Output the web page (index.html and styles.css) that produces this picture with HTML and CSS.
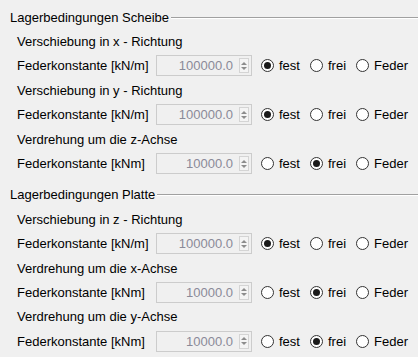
FILE: index.html
```html
<!DOCTYPE html>
<html>
<head>
<meta charset="utf-8">
<link rel="stylesheet" href="styles.css">
</head>
<body>
<div class="panel">
  <section class="group">
    <div class="legend"><span class="legend-text">Lagerbedingungen Scheibe</span><span class="legend-line"></span></div>
    <div class="sub">Verschiebung in x - Richtung</div>
    <div class="row">
      <span class="label">Federkonstante [kN/m]</span>
      <div class="spin"><span class="value">100000.0</span><span class="btn"><i class="up"></i><i class="down"></i></span></div>
      <div class="radios">
        <span class="radio checked"><i></i>fest</span>
        <span class="radio"><i></i>frei</span>
        <span class="radio"><i></i>Feder</span>
      </div>
    </div>
    <div class="sub">Verschiebung in y - Richtung</div>
    <div class="row">
      <span class="label">Federkonstante [kN/m]</span>
      <div class="spin"><span class="value">100000.0</span><span class="btn"><i class="up"></i><i class="down"></i></span></div>
      <div class="radios">
        <span class="radio checked"><i></i>fest</span>
        <span class="radio"><i></i>frei</span>
        <span class="radio"><i></i>Feder</span>
      </div>
    </div>
    <div class="sub">Verdrehung um die z-Achse</div>
    <div class="row">
      <span class="label">Federkonstante [kNm]</span>
      <div class="spin"><span class="value">10000.0</span><span class="btn"><i class="up"></i><i class="down"></i></span></div>
      <div class="radios">
        <span class="radio"><i></i>fest</span>
        <span class="radio checked"><i></i>frei</span>
        <span class="radio"><i></i>Feder</span>
      </div>
    </div>
  </section>
  <section class="group">
    <div class="legend"><span class="legend-text">Lagerbedingungen Platte</span><span class="legend-line"></span></div>
    <div class="sub">Verschiebung in z - Richtung</div>
    <div class="row">
      <span class="label">Federkonstante [kN/m]</span>
      <div class="spin"><span class="value">100000.0</span><span class="btn"><i class="up"></i><i class="down"></i></span></div>
      <div class="radios">
        <span class="radio checked"><i></i>fest</span>
        <span class="radio"><i></i>frei</span>
        <span class="radio"><i></i>Feder</span>
      </div>
    </div>
    <div class="sub">Verdrehung um die x-Achse</div>
    <div class="row">
      <span class="label">Federkonstante [kNm]</span>
      <div class="spin"><span class="value">10000.0</span><span class="btn"><i class="up"></i><i class="down"></i></span></div>
      <div class="radios">
        <span class="radio"><i></i>fest</span>
        <span class="radio checked"><i></i>frei</span>
        <span class="radio"><i></i>Feder</span>
      </div>
    </div>
    <div class="sub">Verdrehung um die y-Achse</div>
    <div class="row">
      <span class="label">Federkonstante [kNm]</span>
      <div class="spin"><span class="value">10000.0</span><span class="btn"><i class="up"></i><i class="down"></i></span></div>
      <div class="radios">
        <span class="radio"><i></i>fest</span>
        <span class="radio checked"><i></i>frei</span>
        <span class="radio"><i></i>Feder</span>
      </div>
    </div>
  </section>
</div>
</body>
</html>
```

FILE: styles.css
```css
html, body {
  margin: 0;
  padding: 0;
  background: #f0f0f0;
}
body {
  font-family: "Liberation Sans", Arial, sans-serif;
  font-size: 13px;
  color: #000;
  width: 418px;
  height: 357px;
  overflow: hidden;
}
.panel {
  padding-top: 5px;
  display: flex;
  flex-direction: column;
  gap: 7px;
}
.group {
  display: flex;
  flex-direction: column;
}
.legend, .sub, .row {
  height: 24.4px;
  display: flex;
  align-items: center;
}
.legend {
  padding-left: 10px;
}
.legend-text {
  white-space: nowrap;
}
.legend-line {
  flex: 1;
  height: 0;
  margin-left: 2px;
  border-top: 1px solid #a0a0a0;
  border-bottom: 1px solid #ffffff;
  margin-top: 1px;
}
.sub {
  padding-left: 17px;
}
.row {
  padding-left: 17px;
}
.label {
  width: 139px;
  white-space: nowrap;
}
.spin {
  box-sizing: border-box;
  width: 96px;
  height: 21px;
  border: 1px solid #cccccc;
  display: flex;
  align-items: center;
  justify-content: flex-end;
  padding-right: 2px;
}
.value {
  color: #8a8a98;
  margin-right: 6px;
}
.btn {
  box-sizing: border-box;
  width: 10px;
  height: 15px;
  border: 1px solid #d4d4d4;
  background: #f4f4f4;
  display: flex;
  flex-direction: column;
  align-items: center;
  justify-content: center;
  gap: 2px;
}
.btn i {
  display: block;
  width: 0;
  height: 0;
  border-left: 3px solid transparent;
  border-right: 3px solid transparent;
}
.btn .up {
  border-bottom: 3px solid #8c8c8c;
}
.btn .down {
  border-top: 3px solid #8c8c8c;
}
.radios {
  display: flex;
  align-items: center;
  margin-left: 9px;
  gap: 10px;
}
.radio {
  display: flex;
  align-items: center;
  gap: 5px;
}
.radio i {
  box-sizing: border-box;
  width: 13px;
  height: 13px;
  border-radius: 50%;
  border: 1px solid #333333;
  background: #ffffff;
  display: flex;
  align-items: center;
  justify-content: center;
}
.radio.checked i::after {
  content: "";
  width: 7px;
  height: 7px;
  border-radius: 50%;
  background: #1a1a1a;
}
```
